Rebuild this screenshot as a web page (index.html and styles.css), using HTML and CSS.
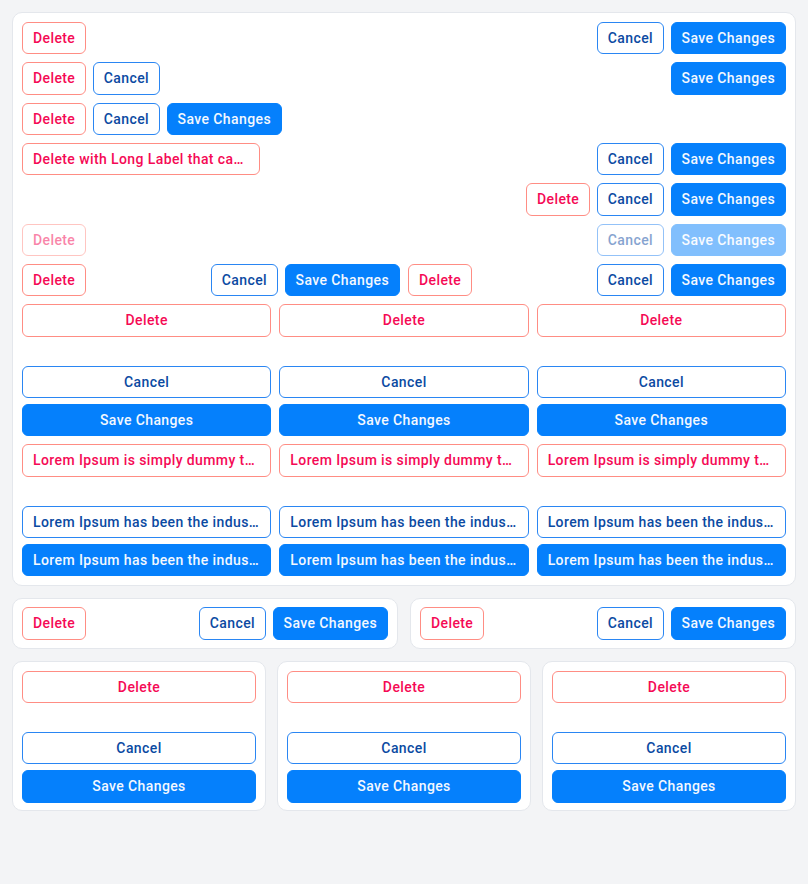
FILE: index.html
```html
<!DOCTYPE html>
<html lang="en">
<head>
<meta charset="utf-8">
<title>Button groups</title>
<link rel="stylesheet" href="styles.css">
</head>
<body>
<div class="page">
  <section class="card card-main">
    <div class="row between">
      <button class="btn danger">Delete</button>
      <div class="group"><button class="btn outline">Cancel</button><button class="btn primary">Save Changes</button></div>
    </div>
    <div class="row between">
      <div class="group"><button class="btn danger">Delete</button><button class="btn outline">Cancel</button></div>
      <button class="btn primary">Save Changes</button>
    </div>
    <div class="row">
      <div class="group"><button class="btn danger">Delete</button><button class="btn outline">Cancel</button><button class="btn primary">Save Changes</button></div>
    </div>
    <div class="row between">
      <button class="btn danger long">Delete with Long Label that can be truncated</button>
      <div class="group"><button class="btn outline">Cancel</button><button class="btn primary">Save Changes</button></div>
    </div>
    <div class="row end">
      <div class="group"><button class="btn danger">Delete</button><button class="btn outline">Cancel</button><button class="btn primary">Save Changes</button></div>
    </div>
    <div class="row between">
      <button class="btn danger" disabled>Delete</button>
      <div class="group"><button class="btn outline" disabled>Cancel</button><button class="btn primary" disabled>Save Changes</button></div>
    </div>
    <div class="halves">
      <div class="row between">
        <button class="btn danger">Delete</button>
        <div class="group"><button class="btn outline">Cancel</button><button class="btn primary">Save Changes</button></div>
      </div>
      <div class="row between">
        <button class="btn danger">Delete</button>
        <div class="group"><button class="btn outline">Cancel</button><button class="btn primary">Save Changes</button></div>
      </div>
    </div>
    <div class="thirds">
      <div class="stack"><button class="btn danger">Delete</button><div class="stack-end"><button class="btn outline">Cancel</button><button class="btn primary">Save Changes</button></div></div>
      <div class="stack"><button class="btn danger">Delete</button><div class="stack-end"><button class="btn outline">Cancel</button><button class="btn primary">Save Changes</button></div></div>
      <div class="stack"><button class="btn danger">Delete</button><div class="stack-end"><button class="btn outline">Cancel</button><button class="btn primary">Save Changes</button></div></div>
    </div>
    <div class="thirds">
      <div class="stack"><button class="btn danger">Lorem Ipsum is simply dummy text of the printing industry</button><div class="stack-end"><button class="btn outline">Lorem Ipsum has been the industry's standard</button><button class="btn primary">Lorem Ipsum has been the industry's standard</button></div></div>
      <div class="stack"><button class="btn danger">Lorem Ipsum is simply dummy text of the printing industry</button><div class="stack-end"><button class="btn outline">Lorem Ipsum has been the industry's standard</button><button class="btn primary">Lorem Ipsum has been the industry's standard</button></div></div>
      <div class="stack"><button class="btn danger">Lorem Ipsum is simply dummy text of the printing industry</button><div class="stack-end"><button class="btn outline">Lorem Ipsum has been the industry's standard</button><button class="btn primary">Lorem Ipsum has been the industry's standard</button></div></div>
    </div>
  </section>

  <div class="pair">
    <section class="card card-small">
      <div class="row between">
        <button class="btn danger">Delete</button>
        <div class="group"><button class="btn outline">Cancel</button><button class="btn primary">Save Changes</button></div>
      </div>
    </section>
    <section class="card card-small">
      <div class="row between">
        <button class="btn danger">Delete</button>
        <div class="group"><button class="btn outline">Cancel</button><button class="btn primary">Save Changes</button></div>
      </div>
    </section>
  </div>

  <div class="triple">
    <section class="card card-col">
      <div class="stack"><button class="btn danger">Delete</button><div class="stack-end"><button class="btn outline">Cancel</button><button class="btn primary">Save Changes</button></div></div>
    </section>
    <section class="card card-col">
      <div class="stack"><button class="btn danger">Delete</button><div class="stack-end"><button class="btn outline">Cancel</button><button class="btn primary">Save Changes</button></div></div>
    </section>
    <section class="card card-col">
      <div class="stack"><button class="btn danger">Delete</button><div class="stack-end"><button class="btn outline">Cancel</button><button class="btn primary">Save Changes</button></div></div>
    </section>
  </div>
</div>
</body>
</html>
```

FILE: styles.css
```css
* { box-sizing: border-box; }
html, body {
  margin: 0;
  padding: 0;
  background: #f3f4f6;
  font-family: Roboto, "Liberation Sans", Arial, sans-serif;
}
.page {
  padding: 12px;
  display: flex;
  flex-direction: column;
  gap: 12px;
}
.card {
  background: #ffffff;
  border: 1px solid #e4e7ec;
  border-radius: 10px;
  padding: 9px;
}
.card-main {
  display: flex;
  flex-direction: column;
  gap: 8px;
}
.card-small { padding: 8px 9px; }
.card-col { padding: 9px 9px 7px; }
.row {
  display: flex;
  align-items: center;
  gap: 6.5px;
  min-width: 0;
}
.row.between { justify-content: space-between; }
.row.end { justify-content: flex-end; }
.group {
  display: flex;
  gap: 6.5px;
  min-width: 0;
}
.halves {
  display: grid;
  grid-template-columns: 1fr 1fr;
  gap: 8px;
}
.thirds {
  display: grid;
  grid-template-columns: repeat(3, minmax(0, 1fr));
  gap: 8px;
}
.stack {
  display: flex;
  flex-direction: column;
  min-width: 0;
}
.stack-end {
  display: flex;
  flex-direction: column;
  gap: 6px;
  margin-top: 29px;
}
.stack .btn {
  width: 100%;
  text-align: center;
}
.pair {
  display: grid;
  grid-template-columns: 1fr 1fr;
  gap: 12px;
}
.triple {
  display: grid;
  grid-template-columns: repeat(3, minmax(0, 1fr));
  gap: 11px;
}
.btn {
  font-family: Roboto, "Liberation Sans", Arial, sans-serif;
  font-size: 14px;
  font-weight: 500;
  letter-spacing: 0.4px;
  line-height: 18.33px;
  padding: 6px 10px;
  border-radius: 6px;
  border: 1px solid transparent;
  background: #ffffff;
  white-space: nowrap;
  overflow: hidden;
  text-overflow: ellipsis;
  cursor: pointer;
  flex: none;
}
.btn.danger {
  color: #f50a55;
  border-color: #ff8d84;
}
.btn.outline {
  color: #0b4aa2;
  border-color: #2a86f3;
}
.btn.primary {
  background: #0580fc;
  border-color: #0580fc;
  color: #f3f8ff;
}
.btn:disabled { opacity: 0.5; cursor: default; }
.btn.long {
  max-width: 238px;
  flex: 0 1 auto;
}
```
